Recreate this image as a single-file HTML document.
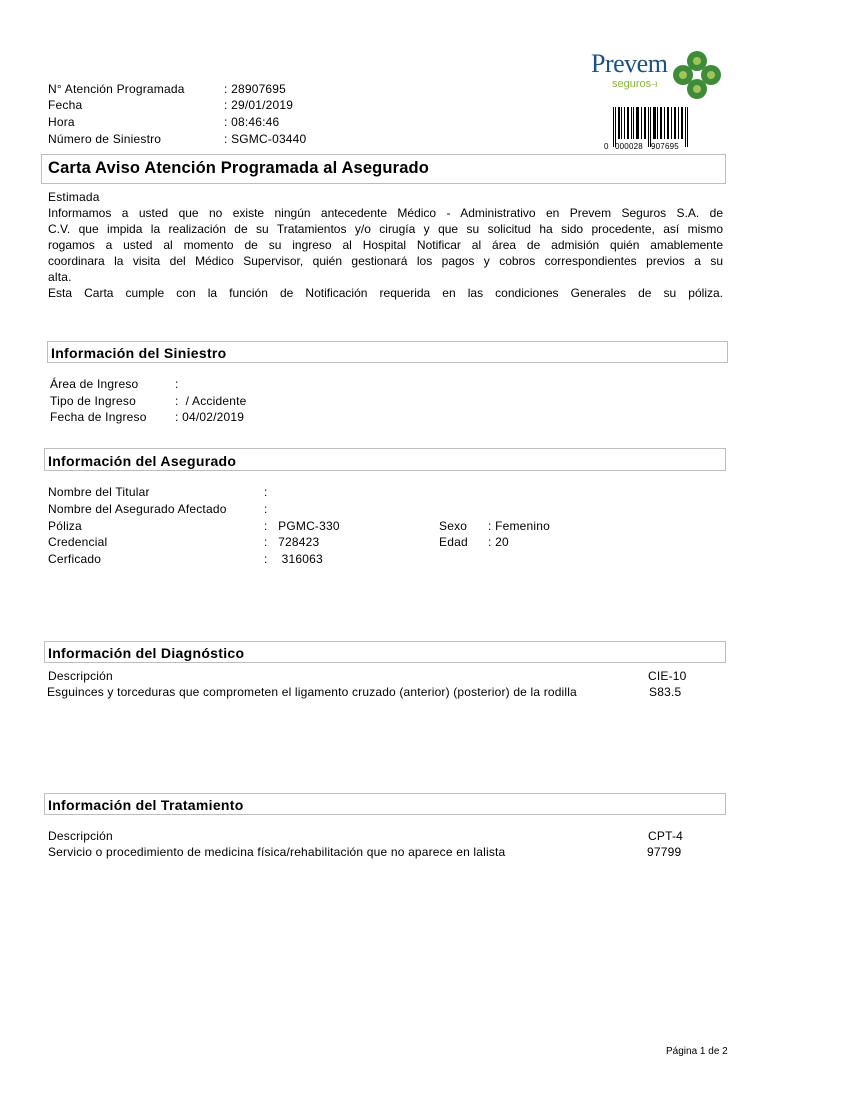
<!DOCTYPE html>
<html><head><meta charset="utf-8"><style>
body{margin:0;width:850px;height:1100px;background:#fff;font-family:"Liberation Sans",Arial,sans-serif;color:#000;position:relative;overflow:hidden;letter-spacing:0.2px}
.t{position:absolute;font-size:12px;line-height:14px;white-space:nowrap}
.box{position:absolute;border:1px solid #bdbdbd;box-sizing:border-box}
.h{position:absolute;font-weight:bold;font-size:14px;white-space:nowrap;letter-spacing:0.3px}
.p{position:absolute;left:48px;width:675px;font-size:12px;line-height:16px;text-align:justify;text-align-last:justify;white-space:nowrap;letter-spacing:0}
</style></head><body>
<div class="t" style="left:48px;top:82px">N° Atención Programada</div><div class="t" style="left:224px;top:82px">: 28907695</div>
<div class="t" style="left:48px;top:98px">Fecha</div><div class="t" style="left:224px;top:98px">: 29/01/2019</div>
<div class="t" style="left:48px;top:115px">Hora</div><div class="t" style="left:224px;top:115px">: 08:46:46</div>
<div class="t" style="left:48px;top:132px">Número de Siniestro</div><div class="t" style="left:224px;top:132px">: SGMC-03440</div>

<div style="position:absolute;left:591px;top:49px;font-family:'Liberation Serif',serif;font-size:26px;color:#1e4f86;line-height:30px;letter-spacing:-0.5px">Prevem</div>
<div style="position:absolute;left:612px;top:78px;font-size:11px;color:#8ab33a;letter-spacing:0">seguros⥽</div>
<svg style="position:absolute;left:673px;top:50px" width="48" height="50" viewBox="0 0 48 50">
<g fill="#3f8b3a"><circle cx="24" cy="11" r="10"/><circle cx="24" cy="39" r="10"/><circle cx="10" cy="25" r="10"/><circle cx="38" cy="25" r="10"/></g>
<g fill="#9fc45a"><circle cx="24" cy="11" r="4"/><circle cx="24" cy="39" r="4"/><circle cx="10" cy="25" r="4"/><circle cx="38" cy="25" r="4"/></g>
<rect x="20" y="21" width="8" height="8" fill="#fff"/></svg>
<svg style="position:absolute;left:604px;top:105px" width="96" height="46">
<g fill="#000">
<rect x="9" y="2" width="1" height="40"/><rect x="11" y="2" width="1" height="40"/><rect x="14" y="2" width="2" height="32"/><rect x="17" y="2" width="1" height="32"/><rect x="20" y="2" width="1" height="32"/><rect x="23" y="2" width="2" height="32"/><rect x="27" y="2" width="1" height="32"/><rect x="29" y="2" width="1" height="32"/><rect x="32" y="2" width="3" height="32"/><rect x="37" y="2" width="1" height="32"/><rect x="40" y="2" width="2" height="32"/><rect x="44" y="2" width="1" height="40"/><rect x="46" y="2" width="1" height="40"/><rect x="49" y="2" width="3" height="32"/><rect x="53" y="2" width="1" height="32"/><rect x="56" y="2" width="2" height="32"/><rect x="60" y="2" width="1" height="32"/><rect x="63" y="2" width="2" height="32"/><rect x="67" y="2" width="1" height="32"/><rect x="70" y="2" width="2" height="32"/><rect x="74" y="2" width="1" height="32"/><rect x="77" y="2" width="2" height="32"/><rect x="81" y="2" width="1" height="40"/><rect x="83" y="2" width="1" height="40"/></g>
<text x="0" y="44" font-size="8" font-family="Liberation Sans">0</text>
<text x="11" y="44" font-size="8" font-family="Liberation Sans">000028</text>
<text x="47" y="44" font-size="8" font-family="Liberation Sans">907695</text></svg>

<div class="box" style="left:41px;top:154px;width:685px;height:30px"></div>
<div class="h" style="left:48px;top:159px;font-size:16.5px;letter-spacing:0.15px">Carta Aviso Atención Programada al Asegurado</div>

<div class="t" style="left:48px;top:190px">Estimada</div>
<div class="p" style="top:205px">Informamos a usted que no existe ningún antecedente Médico - Administrativo en Prevem Seguros S.A. de</div>
<div class="p" style="top:221px">C.V. que impida la realización de su Tratamientos y/o cirugía y que su solicitud ha sido procedente, así mismo</div>
<div class="p" style="top:237px">rogamos a usted al momento de su ingreso al Hospital Notificar al área de admisión quién amablemente</div>
<div class="p" style="top:253px">coordinara la visita del Médico Supervisor, quién gestionará los pagos y cobros correspondientes previos a su</div>
<div class="t" style="left:48px;top:270px">alta.</div>
<div class="p" style="top:285px">Esta Carta cumple con la función de Notificación requerida en las condiciones Generales de su póliza.</div>

<div class="box" style="left:47px;top:341px;width:681px;height:22px"></div>
<div class="h" style="left:51px;top:345px">Información del Siniestro</div>
<div class="t" style="left:50px;top:377px">Área de Ingreso</div><div class="t" style="left:175px;top:377px">:</div>
<div class="t" style="left:50px;top:394px">Tipo de Ingreso</div><div class="t" style="left:175px;top:394px">:&nbsp; / Accidente</div>
<div class="t" style="left:50px;top:410px">Fecha de Ingreso</div><div class="t" style="left:175px;top:410px">: 04/02/2019</div>

<div class="box" style="left:44px;top:448px;width:682px;height:23px"></div>
<div class="h" style="left:48px;top:453px">Información del Asegurado</div>
<div class="t" style="left:48px;top:485px">Nombre del Titular</div><div class="t" style="left:264px;top:485px">:</div>
<div class="t" style="left:48px;top:502px">Nombre del Asegurado Afectado</div><div class="t" style="left:264px;top:502px">:</div>
<div class="t" style="left:48px;top:519px">Póliza</div><div class="t" style="left:264px;top:519px">:&nbsp;&nbsp; PGMC-330</div>
<div class="t" style="left:48px;top:535px">Credencial</div><div class="t" style="left:264px;top:535px">:&nbsp;&nbsp; 728423</div>
<div class="t" style="left:48px;top:552px">Cerficado</div><div class="t" style="left:264px;top:552px">:&nbsp;&nbsp;&nbsp; 316063</div>
<div class="t" style="left:439px;top:519px">Sexo</div><div class="t" style="left:488px;top:519px">: Femenino</div>
<div class="t" style="left:439px;top:535px">Edad</div><div class="t" style="left:488px;top:535px">: 20</div>

<div class="box" style="left:44px;top:641px;width:682px;height:22px"></div>
<div class="h" style="left:48px;top:645px">Información del Diagnóstico</div>
<div class="t" style="left:48px;top:669px">Descripción</div><div class="t" style="left:648px;top:669px">CIE-10</div>
<div class="t" style="left:47px;top:685px;letter-spacing:0.17px">Esguinces y torceduras que comprometen el ligamento cruzado (anterior) (posterior) de la rodilla</div><div class="t" style="left:649px;top:685px">S83.5</div>

<div class="box" style="left:44px;top:793px;width:682px;height:22px"></div>
<div class="h" style="left:48px;top:797px">Información del Tratamiento</div>
<div class="t" style="left:48px;top:829px">Descripción</div><div class="t" style="left:648px;top:829px">CPT-4</div>
<div class="t" style="left:48px;top:845px;letter-spacing:0.18px">Servicio o procedimiento de medicina física/rehabilitación que no aparece en lalista</div><div class="t" style="left:647px;top:845px">97799</div>

<div class="t" style="left:666px;top:1045px;font-size:10px;letter-spacing:0">Página 1 de 2</div>
</body></html>
